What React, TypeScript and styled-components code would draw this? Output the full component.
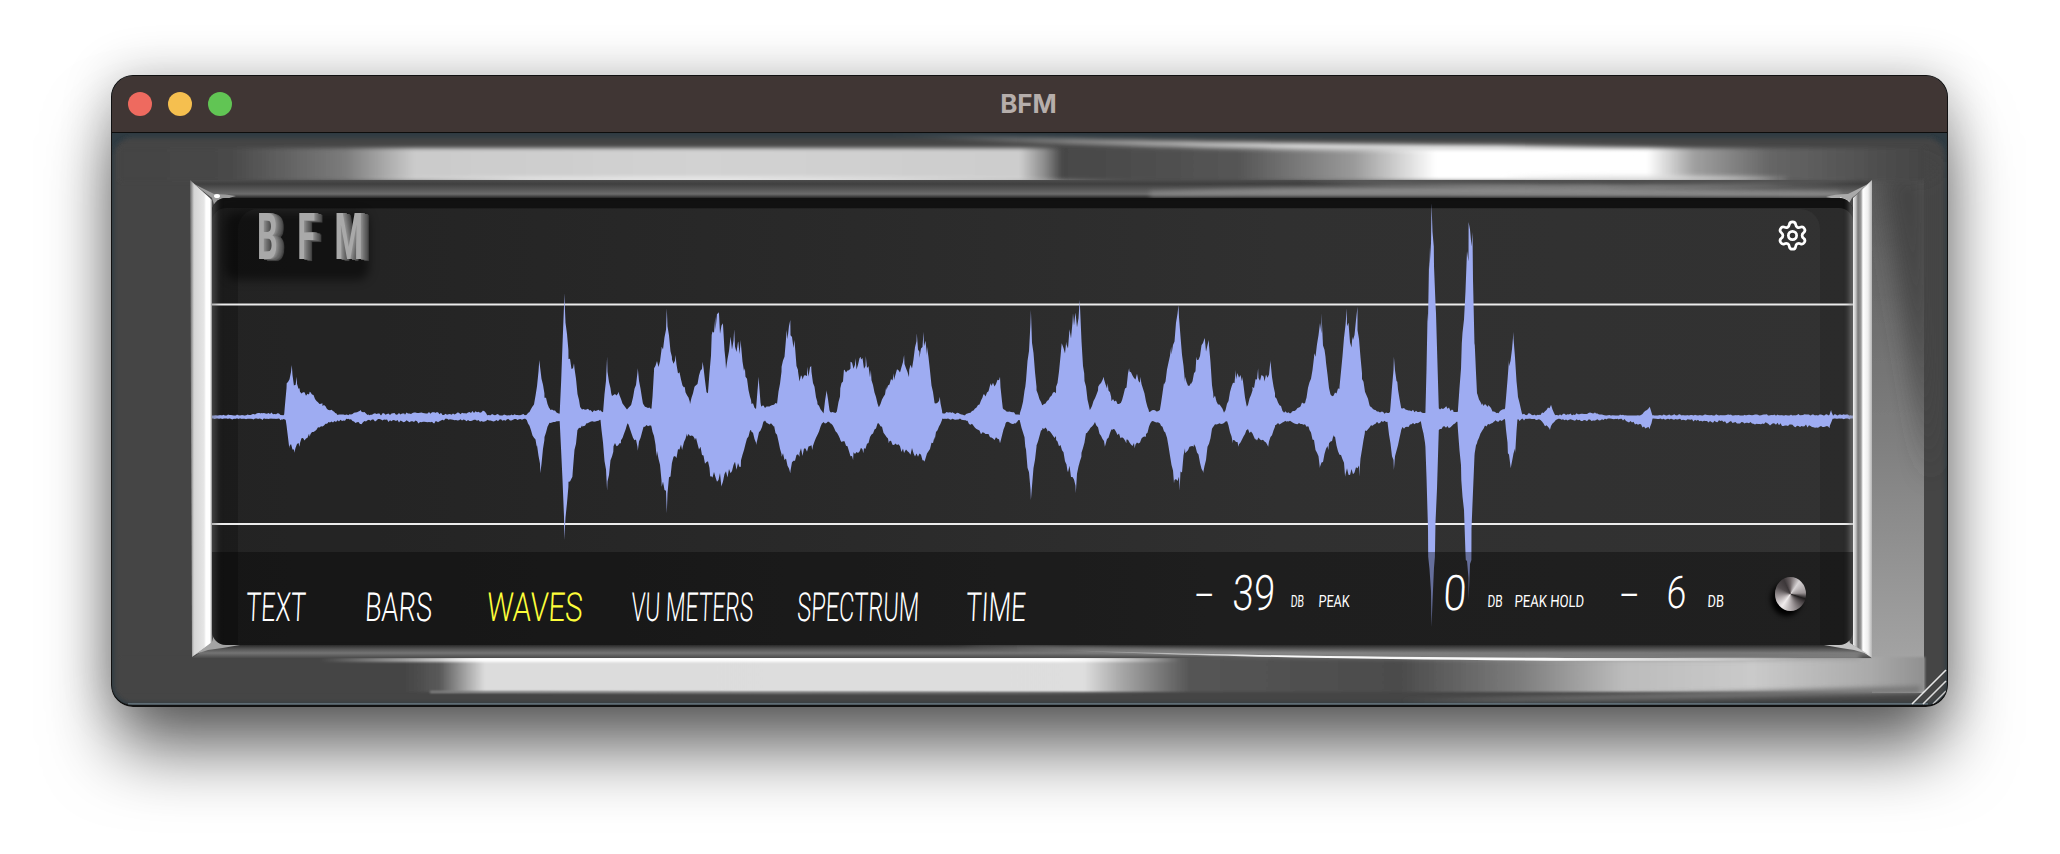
import React from "react";
import styled, { createGlobalStyle } from "styled-components";
import { Settings } from "lucide-react";

const Global = createGlobalStyle`
  html, body { margin: 0; background: #fff; overflow: hidden; }
  #root { width: 2060px; height: 854px; }
`;
const Page = styled.div`
  box-sizing: border-box;
  width: 2060px;
  height: 854px;
  padding: 75px 0 0 111px;
  background: #fff;
`;
const Win = styled.div`
  position: relative;
  box-sizing: border-box;
  width: 1837px;
  border: 1px solid #111;
  border-bottom-width: 2px;
  border-radius: 22px;
  overflow: hidden;
  background: #2f3b42;
`;
const WinShadow = styled.div`
  width: 1837px;
  border-radius: 22px;
  box-shadow: 0 48px 70px -6px rgba(0, 0, 0, 0.6), 0 0 50px rgba(0, 0, 0, 0.24);
`;
const TitleBar = styled.div`
  display: flex;
  align-items: center;
  position: relative;
  height: 56px;
  padding-left: 16px;
  gap: 16px;
  background: #403634;
  border-bottom: 1px solid #0d0d0d;
`;
const Light = styled.span<{ $c: string }>`
  width: 24px;
  height: 24px;
  border-radius: 50%;
  background: ${(p) => p.$c};
`;
const Title = styled.div`
  flex: 1;
  margin-right: 138px;
  margin-top: -2px;
  text-align: center;
  font: 700 26px "Inter", "Liberation Sans", sans-serif;
  color: #b6aeab;
`;
const Chassis = styled.div`
  position: relative;
  box-sizing: border-box;
  height: 572px;
  padding: 65px 94px 60px 100px;
`;
const ChromeArt = styled.svg`
  position: absolute;
  inset: 0;
  width: 100%;
  height: 100%;
`;
const Screen = styled.div`
  position: relative;
  box-sizing: border-box;
  height: 447px;
  display: flex;
  flex-direction: column;
  border-radius: 14px;
  overflow: hidden;
  background: linear-gradient(90deg, #1b1b1b 0%, #222 35%, #292929 65%, #2b2b2b 100%);
  box-shadow: inset 0 10px 0 #111;
  &::before {
    content: "";
    position: absolute;
    inset: 11px 33px 0 26px;
    border-radius: 20px 20px 0 0;
    background: rgba(255, 255, 255, 0.035);
  }
  &::after {
    content: "";
    position: absolute;
    inset: 0;
    box-shadow: inset 9px 0 6px -5px rgba(110, 110, 110, 0.5), inset -9px 0 5px -5px rgba(150, 150, 150, 0.5);
    pointer-events: none;
  }
`;
const WaveSvg = styled.svg`
  position: absolute;
  inset: 0;
  width: 1641px;
  height: 447px;
`;
const Header = styled.div`
  position: relative;
  z-index: 1;
  display: flex;
  justify-content: space-between;
  align-items: flex-start;
  padding: 21px 44px 0 13px;
`;
const LogoPlate = styled.div`
  position: relative;
  width: 144px;
  height: 60px;
  &::before {
    content: "";
    position: absolute;
    inset: -7px 0 -1px 0;
    background: rgba(0, 0, 0, 0.5);
    border-radius: 12px;
    filter: blur(5px);
  }
`;
const Logo = styled.div`
  position: relative;
  display: inline-block;
  margin: -14px 0 0 32px;
  font: 700 65px/65px "Roboto", sans-serif;
  letter-spacing: 39px;
  white-space: nowrap;
  color: #a9a9a9;
  transform: scaleX(0.5);
  transform-origin: left top;
  filter: blur(0.5px);
  text-shadow: 2px 0 0 #8a8a8a, 4px 0 0 #808080, 6px 0 0 #757575, 8px 0 0 #6b6b6b, 10px 1px 0 #626262,
    12px 1px 0 #5a5a5a, 14px 1px 0 #4f4f4f, 16px 2px 1px #444;
`;
const Gear = styled.div`
  display: flex;
  color: #fff;
`;
const Bar = styled.div`
  position: relative;
  z-index: 1;
  margin-top: auto;
  height: 93px;
  display: flex;
  justify-content: space-between;
  align-items: flex-start;
  padding: 0 47px 0 35px;
  background: rgba(0, 0, 0, 0.36);
`;
const Nav = styled.div`
  display: grid;
  grid-template-columns: 119px 122px 144px 166px 169px 60px;
  margin-top: 36px;
`;
const Meters = styled.div`
  display: flex;
  align-items: flex-start;
`;
const Lcd = styled.span<{ $w: number; $size: number; $sx: number; $top?: number; $weight?: number; $on?: boolean }>`
  display: block;
  flex: none;
  width: ${(p) => p.$w}px;
  margin-top: ${(p) => p.$top ?? 0}px;
  font-family: "Roboto", "Liberation Sans", sans-serif;
  font-weight: ${(p) => p.$weight ?? 300};
  font-size: ${(p) => p.$size}px;
  line-height: 1;
  white-space: nowrap;
  color: ${(p) => (p.$on ? "#fdfd3a" : "#fff")};
  transform: scaleX(${(p) => p.$sx}) skewX(-4deg);
  transform-origin: left top;
`;
const Knob = styled.div`
  flex: none;
  width: 31px;
  height: 34px;
  margin-top: 25px;
  border-radius: 50%;
  background: conic-gradient(
    from 0deg,
    #6e6668 0deg,
    #d8d4d6 35deg,
    #9a9395 85deg,
    #1f1c1d 108deg,
    #4a4446 125deg,
    #a39c9e 170deg,
    #f0eced 215deg,
    #b4adaf 250deg,
    #514b4d 300deg,
    #3c3739 335deg,
    #6e6668 360deg
  );
  box-shadow: -4px 5px 5px #000;
`;
const Grip = styled.svg`
  position: absolute;
  right: 0;
  bottom: 0;
  width: 36px;
  height: 36px;
`;

const seg5: number[][] = [[25,406],[100,405],[120,399],[165,403],[170,310],[180,255],[185,315],[190,290],[195,325],[215,335],[240,370],[265,400],[290,405],[315,390],[330,403],[400,400],[460,397],[480,403],[555,392],[565,405],[640,405],[655,370],[665,240],[675,340],[685,385],[705,398],[708,300],[714,40],[722,210],[733,250],[745,380],[765,390],[785,390],[790,395],[798,230],[806,340],[820,335],[835,385],[845,375],[858,265],[868,370],[885,385],[890,265],[905,200],[915,85],[925,230],[932,225],[950,320],[960,365],[985,245],[995,340],[1003,165],[1010,110],[1017,95],[1025,130],[1030,240],[1040,170],[1047,148],[1055,185],[1060,180],[1068,265],[1080,360],[1090,385],[1095,290],[1100,380],[1130,370],[1140,260],[1150,150],[1157,120],[1165,180],[1172,270],[1180,290],[1190,260],[1198,258],[1210,365],[1222,400],[1228,330],[1235,395],[1248,395],[1255,325],[1262,270],[1275,245],[1285,235],[1295,230],[1305,228],[1315,270],[1330,380],[1345,320],[1360,280],[1380,225],[1390,270],[1405,160],[1410,215],[1418,155],[1425,200],[1440,370],[1450,350],[1455,400],[1470,395],[1500,405],[1520,385],[1535,345],[1550,310]];
const seg6: number[][] = [[0,290],[5,385],[35,405],[45,320],[55,90],[65,320],[75,375],[100,320],[110,190],[118,185],[130,100],[142,60],[150,280],[160,390],[175,320],[185,290],[192,310],[198,350],[215,370],[230,265],[250,290],[265,390],[285,390],[292,310],[305,200],[318,75],[330,290],[340,310],[350,230],[365,175],[372,180],[380,340],[400,395],[420,270],[432,290],[440,380],[450,320],[460,265],[470,290],[482,240],[490,340],[505,395],[520,395],[545,360],[560,220],[573,100],[580,230],[590,345],[605,320],[618,85],[628,170],[637,80],[645,280],[660,380],[680,395],[695,395],[702,230],[708,305],[715,385],[750,395],[758,398],[762,100],[765,-100],[769,-231],[773,-100],[777,100],[782,385],[795,378],[808,392],[816,395],[823,190],[835,-174],[842,-144],[846,190],[850,340],[860,370],[870,375],[885,400],[900,385],[907,240],[915,155],[922,330],[930,400],[960,405],[982,375],[990,405],[1060,397],[1075,405],[1140,408],[1158,380],[1163,408],[1200,405],[1300,405],[1400,405],[1478,405],[1481,390],[1484,405],[1518,405]];
const low5: number[][] = [[25,414],[160,418],[168,420],[175,505],[185,518],[195,500],[215,470],[250,430],[290,418],[315,432],[330,420],[460,430],[480,418],[555,425],[640,418],[660,500],[667,580],[675,480],[685,428],[705,425],[714,780],[722,620],[730,590],[740,450],[750,440],[760,430],[785,420],[798,632],[810,515],[825,490],[838,430],[858,512],[870,440],[885,440],[895,530],[905,620],[915,700],[925,550],[945,510],[955,470],[970,480],[1000,590],[1022,620],[1040,580],[1060,560],[1080,450],[1090,495],[1105,425],[1125,440],[1140,530],[1157,580],[1175,530],[1200,510],[1220,430],[1235,430],[1255,480],[1280,540],[1300,520],[1330,430],[1350,490],[1380,520],[1420,545],[1440,480],[1455,415],[1500,420],[1530,460]];
const low6: number[][] = [[0,490],[10,430],[25,430],[35,420],[45,500],[55,660],[65,500],[75,450],[85,455],[100,480],[120,570],[135,640],[145,530],[155,460],[170,430],[187,500],[200,450],[225,490],[240,505],[260,470],[270,425],[285,430],[295,460],[310,610],[320,632],[330,520],[345,500],[362,580],[380,440],[405,425],[415,490],[425,500],[440,450],[455,480],[478,500],[490,440],[510,425],[550,440],[570,565],[585,510],[595,470],[615,590],[640,590],[650,460],[670,430],[690,425],[702,570],[715,450],[750,425],[758,500],[763,830],[769,1041],[775,830],[782,450],[800,445],[815,425],[822,600],[830,840],[835,960],[840,840],[846,520],[850,490],[860,450],[880,425],[900,420],[905,520],[910,565],[918,520],[922,420],[960,418],[980,450],[990,420],[1060,422],[1100,415],[1158,448],[1163,415],[1478,445],[1484,415],[1518,415]];

const toPts = (a: number[][], b: number[][]) => [
  ...a.map(([x, y]) => [200 + x / 1.96, 280 + y / 3]),
  ...b.map(([x, y]) => [1000 + x / 1.782, 280 + y / 3]),
];
const noise = (i: number) => {
  const s = Math.sin(i * 12.9898) * 43758.5453;
  return s - Math.floor(s);
};
// walks the hand-traced envelope; the traced vertices stay exact, what lies between them gets a spiky inward jitter
const sample = (pts: number[][], seed: number) => {
  const out: string[] = [];
  let k = 0;
  for (let x = 213; x <= 1852; x += 1.5) {
    while (k < pts.length - 2 && pts[k + 1][0] < x) {
      k++;
      out.push(`${pts[k][0].toFixed(1)} ${pts[k][1].toFixed(1)}`);
    }
    const [x0, y0] = pts[k];
    const [x1, y1] = pts[k + 1];
    const t = x1 === x0 ? 0 : Math.min(1, Math.max(0, (x - x0) / (x1 - x0)));
    const y = y0 + (y1 - y0) * t;
    const amp = Math.abs(y - 417);
    const dir = y < 417 ? 1 : -1;
    const v = y + dir * noise(x * 2 + seed) * (amp * 0.2) + (noise(x * 3 + seed) - 0.5) * 2.2;
    out.push(`${x} ${v.toFixed(1)}`);
  }
  return out;
};
const upper = sample(toPts(seg5, seg6), 0);
const lower = sample(toPts(low5, low6), 77).reverse();
const wavePath = `M${upper.join("L")}L${lower.join("L")}Z`;

const nav = [
  { t: "TEXT", sx: 0.63 },
  { t: "BARS", sx: 0.68 },
  { t: "WAVES", sx: 0.74, on: true },
  { t: "VU METERS", sx: 0.57 },
  { t: "SPECTRUM", sx: 0.59 },
  { t: "TIME", sx: 0.65 },
];
const meters = [
  { t: "–", w: 39, s: 45, sx: 0.7, top: 21 },
  { t: "39", w: 57, s: 49, sx: 0.78, top: 17 },
  { t: "DB", w: 28, s: 17, sx: 0.62, top: 41, wt: 400 },
  { t: "PEAK", w: 126, s: 17, sx: 0.74, top: 41, wt: 400 },
  { t: "0", w: 43, s: 49, sx: 0.85, top: 17 },
  { t: "DB", w: 27, s: 17, sx: 0.7, top: 41, wt: 400 },
  { t: "PEAK HOLD", w: 105, s: 17, sx: 0.77, top: 41, wt: 400 },
  { t: "–", w: 48, s: 45, sx: 0.7, top: 21 },
  { t: "6", w: 40, s: 45, sx: 0.8, top: 18 },
  { t: "DB", w: 67, s: 17, sx: 0.75, top: 41, wt: 400 },
];

const stops = (list: [number, string][], from: number, to: number) =>
  list.map(([x, c]) => <stop key={x} offset={(x - from) / (to - from)} stopColor={c} />);

const fade = (id: string, x1: number, a: number, b: number, x2: number) => (
  <linearGradient id={id} gradientUnits="userSpaceOnUse" x1={x1} x2={x2} y1="0" y2="0">
    <stop offset="0" stopColor="#fff" stopOpacity="0" />
    <stop offset={(a - x1) / (x2 - x1)} stopColor="#fff" stopOpacity="0.95" />
    <stop offset={(b - x1) / (x2 - x1)} stopColor="#fff" stopOpacity="0.95" />
    <stop offset="1" stopColor="#fff" stopOpacity="0" />
  </linearGradient>
);

const Chrome = () => (
  <ChromeArt viewBox="112 133 1835 572" preserveAspectRatio="none">
    <defs>
      <filter id="b1" x="-5%" y="-100%" width="110%" height="300%"><feGaussianBlur stdDeviation="1.2" /></filter>
      <filter id="b2" x="-5%" y="-50%" width="110%" height="200%"><feGaussianBlur stdDeviation="2" /></filter>
      <filter id="b3" x="-5%" y="-200%" width="110%" height="500%"><feGaussianBlur stdDeviation="2.4" /></filter>
      <filter id="b12" x="-60%" y="-20%" width="220%" height="140%"><feGaussianBlur stdDeviation="12" /></filter>
      <filter id="g1" x="-30%" y="-30%" width="160%" height="160%"><feGaussianBlur stdDeviation="0.7" /></filter>
      {fade("swTop", 880, 1300, 1500, 1680)}
      {fade("hiTop", 330, 520, 1010, 1170)}
      {fade("hiBot", 320, 480, 1060, 1180)}
      {fade("lineBot", 1060, 1280, 1560, 1800)}
      <linearGradient id="topBand" gradientUnits="userSpaceOnUse" x1="130" x2="1925" y1="0" y2="0">
        {stops([[130,"#444"],[227,"#484848"],[345,"#7c7c7c"],[415,"#cbcbcb"],[700,"#d2d2d2"],[1020,"#cdcdcd"],[1045,"#8a8a8a"],[1062,"#474747"],[1237,"#555"],[1354,"#9a9a9a"],[1436,"#fff"],[1647,"#fff"],[1694,"#a0a0a0"],[1770,"#666"],[1925,"#444"]], 130, 1925)}
      </linearGradient>
      <linearGradient id="botBand" gradientUnits="userSpaceOnUse" x1="130" x2="1925" y1="0" y2="0">
        {stops([[130,"#444"],[403,"#444"],[440,"#5a5a5a"],[485,"#dcdcdc"],[1084,"#dedede"],[1119,"#aaa"],[1190,"#555"],[1401,"#4c4c4c"],[1518,"#7c7c7c"],[1624,"#bcbcbc"],[1753,"#cacaca"],[1870,"#aaa"],[1925,"#909090"]], 130, 1925)}
      </linearGradient>
      <linearGradient id="rightFill" gradientUnits="userSpaceOnUse" x1="0" x2="0" y1="180" y2="690">
        <stop offset="0" stopColor="#5c5c5c" /><stop offset="0.45" stopColor="#7a7a7a" /><stop offset="1" stopColor="#a8a8a8" />
      </linearGradient>
      <linearGradient id="left" gradientUnits="userSpaceOnUse" x1="190" x2="212" y1="0" y2="0">
        {stops([[190,"#666"],[194,"#d4d4d4"],[204,"#e6e6e6"],[206,"#fff"],[210,"#fff"],[212,"#8a8a8a"]], 190, 212)}
      </linearGradient>
      <linearGradient id="right" gradientUnits="userSpaceOnUse" x1="1853" x2="1872" y1="0" y2="0">
        {stops([[1853,"#f4f4f4"],[1856,"#bdbdbd"],[1858,"#777"],[1861,"#999"],[1863,"#fff"],[1868,"#eee"],[1872,"#b4b4b4"]], 1853, 1872)}
      </linearGradient>
      <linearGradient id="top" gradientUnits="userSpaceOnUse" x1="0" x2="0" y1="180" y2="198">
        {stops([[180,"#4c4c4c"],[184,"#3f3f3f"],[190,"#5a5a5a"],[194,"#6c6c6c"],[198,"#262626"]], 180, 198)}
      </linearGradient>
      <linearGradient id="bottom" gradientUnits="userSpaceOnUse" x1="0" x2="0" y1="645" y2="658">
        {stops([[645,"#2a2a2a"],[649,"#555"],[653,"#747474"],[658,"#4a4a4a"]], 645, 658)}
      </linearGradient>
    </defs>
    <rect x="114" y="138" width="1831" height="565" rx="18" fill="#444" filter="url(#b2)" />
    <rect x="1872" y="178" width="52" height="515" fill="url(#rightFill)" filter="url(#g1)" />
    <path d="M1880 170 L1932 170 L1932 480 Z" fill="#444" filter="url(#b12)" />
    <rect x="120" y="148" width="1805" height="33" fill="url(#topBand)" filter="url(#b2)" />
    <rect x="120" y="657" width="1805" height="35" fill="url(#botBand)" filter="url(#b1)" />
    <path d="M1400 701 Q1650 694 1920 686 L1920 693 Q1650 701 1400 701Z" fill="#777" filter="url(#b3)" />
    <rect x="128" y="703" width="1800" height="1.6" fill="#5f6d75" />
    {/* swooshes around the bands */}
    <path d="M880 134 C1050 139 1200 143 1436 145 L1680 147 L1680 150 L1436 150 C1200 149 1050 145 880 134Z" fill="url(#swTop)" filter="url(#b3)" />
    <path d="M330 180 C600 177 900 177 1170 183 C900 186 600 185 330 180Z" fill="url(#hiTop)" filter="url(#b3)" />
    <path d="M1500 178 C1620 182 1720 182 1790 179 C1720 176 1620 175 1500 178Z" fill="#ddd" filter="url(#b3)" />
    <path d="M320 658 C600 656 900 656 1180 658 L1180 662 L320 662Z" fill="url(#hiBot)" filter="url(#b1)" />
    <path d="M430 691 C700 692 900 692 1150 694 L430 693Z" fill="#8a8a8a" filter="url(#b1)" />
    {/* mitred frame */}
    <rect x="205" y="193" width="1660" height="460" fill="#4a4a4a" />
    <polygon points="190,180 1872,180 1853,198 212,198" fill="url(#top)" />
    <polygon points="192,658 1872,658 1853,645 212,645" fill="url(#bottom)" />
    <polygon points="190,180 212,200 212,643 192,657" fill="url(#left)" />
    <polygon points="1872,180 1853,198 1853,645 1872,658" fill="url(#right)" />
    <path d="M1150 192 C1350 184 1600 188 1840 192 L1840 197 C1600 196 1350 194 1150 196Z" fill="#8c8c8c" filter="url(#b3)" />
    <path d="M1300 181 C1500 186 1700 186 1860 182 C1700 190 1500 190 1300 181Z" fill="#a0a0a0" filter="url(#b3)" />
    <path d="M940 644 C1150 651 1500 658 1860 655 L1860 659 C1500 662 1150 656 940 644Z" fill="#999" filter="url(#b3)" />
    <path d="M1060 650 C1200 655 1500 660 1800 657 L1800 660 C1500 663 1200 657 1060 650Z" fill="url(#lineBot)" filter="url(#g1)" />
    {/* corner glints */}
    <path d="M194 184 L214 194 Q226 194 236 196 Q224 198 220 206 L218 218 Q214 204 212 198Z" fill="#9c9c9c" filter="url(#g1)" />
    <ellipse cx="217" cy="196" rx="3" ry="2" fill="#fff" />
    <path d="M1868 184 L1848 194 Q1834 194 1826 197 Q1838 198 1842 206 L1845 218 Q1848 204 1852 198Z" fill="#aaa" filter="url(#g1)" />
    <path d="M1840 197 L1849 201 L1845 207Z" fill="#fff" />
    <path d="M196 654 L212 642 Q216 630 214 620 Q224 640 240 645 Q224 648 208 650Z" fill="#a4a4a4" filter="url(#g1)" />
    <path d="M1868 654 L1850 643 Q1846 630 1848 622 Q1838 640 1824 645 Q1840 648 1854 650Z" fill="#c4c4c4" filter="url(#g1)" />
  </ChromeArt>
);

export default function App() {
  return (
    <Page>
      <Global />
      <WinShadow>
        <Win>
          <TitleBar>
            <Light $c="#ee6a5f" />
            <Light $c="#f5bf4f" />
            <Light $c="#61c554" />
            <Title>BFM</Title>
          </TitleBar>
          <Chassis>
            <Chrome />
            <Screen>
              <WaveSvg viewBox="212 198 1641 447">
                <rect x="212" y="303.5" width="1641" height="2" fill="#ececec" />
                <rect x="212" y="523" width="1641" height="2" fill="#ececec" />
                <path d="M212 415.5H1853V418.5H212Z" fill="#9eacf2" />
                <path d={wavePath} fill="#9eacf2" />
              </WaveSvg>
              <Header>
                <LogoPlate>
                  <Logo>BFM</Logo>
                </LogoPlate>
                <Gear>
                  <Settings size={33} strokeWidth={2} />
                </Gear>
              </Header>
              <Bar>
                <Nav>
                  {nav.map((n) => (
                    <Lcd key={n.t} $w={60} $size={40} $sx={n.sx} $on={n.on}>
                      {n.t}
                    </Lcd>
                  ))}
                </Nav>
                <Meters>
                  {meters.map((m, i) => (
                    <Lcd key={i} $w={m.w} $size={m.s} $sx={m.sx} $top={m.top} $weight={m.wt}>
                      {m.t}
                    </Lcd>
                  ))}
                  <Knob />
                </Meters>
              </Bar>
            </Screen>
            <Grip viewBox="0 0 36 36">
              <path d="M1 35L35 1" stroke="#e8e8e8" strokeWidth="1.6" />
              <path d="M12 35L35 12" stroke="#dcdcdc" strokeWidth="1.6" />
              <path d="M22 35L35 22" stroke="#c8c8c8" strokeWidth="1.4" />
            </Grip>
          </Chassis>
        </Win>
      </WinShadow>
    </Page>
  );
}
